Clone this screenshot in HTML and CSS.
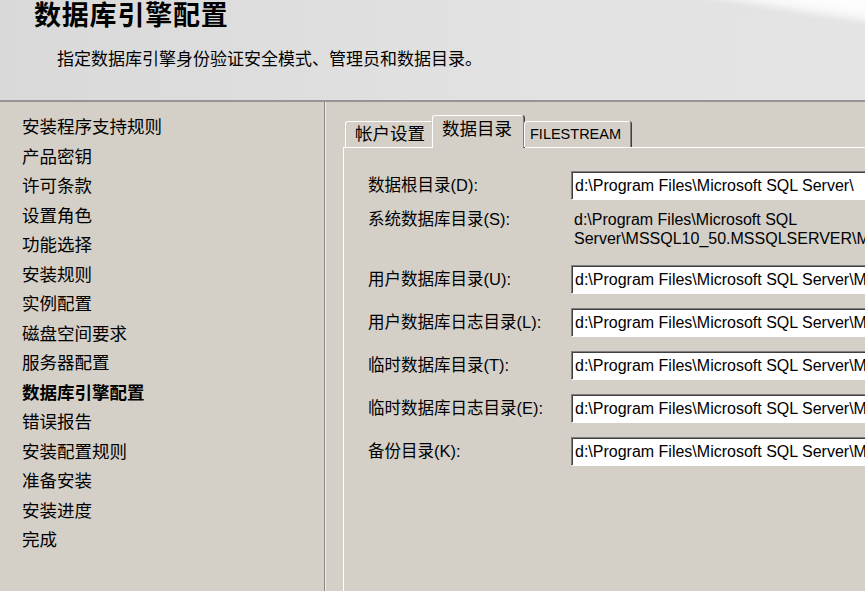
FILE: index.html
```html
<!DOCTYPE html>
<html lang="zh-CN">
<head>
    <meta charset="UTF-8">
    <title>数据库引擎配置</title>
    <link rel="stylesheet" href="styles.css">
</head>
<body>
    <div class="header">
        <div class="title">数据库引擎配置</div>
        <div class="subtitle">指定数据库引擎身份验证安全模式、管理员和数据目录。</div>
    </div>
    <div class="main">
        <div class="nav">
            <div>安装程序支持规则</div>
            <div>产品密钥</div>
            <div>许可条款</div>
            <div>设置角色</div>
            <div>功能选择</div>
            <div>安装规则</div>
            <div>实例配置</div>
            <div>磁盘空间要求</div>
            <div>服务器配置</div>
            <div class="current">数据库引擎配置</div>
            <div>错误报告</div>
            <div>安装配置规则</div>
            <div>准备安装</div>
            <div>安装进度</div>
            <div>完成</div>
        </div>
        <div class="content">
            <div class="tabs">
                <div class="tab">帐户设置</div>
                <div class="tab active">数据目录</div>
                <div class="tab latin">FILESTREAM</div>
            </div>
            <div class="panel">
                <div class="row">
                    <div class="label">数据根目录(D):</div>
                    <div class="field">d:\Program Files\Microsoft SQL Server\</div>
                </div>
                <div class="row sys">
                    <div class="label">系统数据库目录(S):</div>
                    <div class="value">d:\Program Files\Microsoft SQL<br>Server\MSSQL10_50.MSSQLSERVER\MSSQL\Data</div>
                </div>
                <div class="row">
                    <div class="label">用户数据库目录(U):</div>
                    <div class="field">d:\Program Files\Microsoft SQL Server\MSSQL10_50.MSSQLSERVER\MSSQL\Data</div>
                </div>
                <div class="row">
                    <div class="label">用户数据库日志目录(L):</div>
                    <div class="field">d:\Program Files\Microsoft SQL Server\MSSQL10_50.MSSQLSERVER\MSSQL\Data</div>
                </div>
                <div class="row">
                    <div class="label">临时数据库目录(T):</div>
                    <div class="field">d:\Program Files\Microsoft SQL Server\MSSQL10_50.MSSQLSERVER\MSSQL\Data</div>
                </div>
                <div class="row">
                    <div class="label">临时数据库日志目录(E):</div>
                    <div class="field">d:\Program Files\Microsoft SQL Server\MSSQL10_50.MSSQLSERVER\MSSQL\Data</div>
                </div>
                <div class="row">
                    <div class="label">备份目录(K):</div>
                    <div class="field">d:\Program Files\Microsoft SQL Server\MSSQL10_50.MSSQLSERVER\MSSQL\Backup</div>
                </div>
            </div>
        </div>
    </div>
</body>
</html>
```

FILE: styles.css
```css
html, body {
    margin: 0;
    padding: 0;
    width: 865px;
    height: 591px;
    overflow: hidden;
}
body {
    background: #d4d0c8;
    color: #000;
    font-family: "Liberation Sans", "Noto Sans CJK SC", sans-serif;
}
.header {
    position: relative;
    height: 100px;
    border-bottom: 2px solid #959595;
    background: linear-gradient(to right, #d9d9d9, #e2e2e2 60%, #e4e4e4);
    overflow: hidden;
}
.header::after {
    content: "";
    position: absolute;
    top: -30px;
    right: -60px;
    width: 260px;
    height: 40px;
    background: linear-gradient(to bottom, rgba(255,255,255,0.2), #fff 60%, rgba(255,255,255,0.6));
    transform: rotate(9deg);
    filter: blur(3px);
}
.title {
    padding: 0 0 0 34px;
    font-size: 27px;
    font-weight: bold;
    line-height: 32px;
    letter-spacing: 0.8px;
}
.subtitle {
    padding: 11px 0 0 57px;
    font-size: 17px;
    line-height: 34px;
}
.main {
    display: flex;
    height: 489px;
}
.nav {
    width: 325px;
    flex-shrink: 0;
    padding: 11px 0 0 22px;
    box-sizing: border-box;
    border-right: 1px solid #8a8784;
    box-shadow: 1px 0 0 #ecebe8;
    font-size: 17.5px;
    line-height: 29.5px;
    white-space: nowrap;
}
.nav .current {
    font-weight: bold;
}
.content {
    flex: 1;
    min-width: 0;
    padding: 11px 0 0 18px;
    display: flex;
    flex-direction: column;
}
.tabs {
    display: flex;
    align-items: flex-end;
    padding-left: 2px;
    height: 34px;
    position: relative;
    z-index: 1;
}
.tab {
    height: 25px;
    padding: 0 7px 0 9px;
    font-size: 17.5px;
    line-height: 24px;
    white-space: nowrap;
    border-top: 1px solid #fff;
    border-left: 1px solid #fff;
    border-right: 1px solid #808080;
    box-shadow: 1px 0 0 #404040;
    border-radius: 3px 3px 0 0;
    margin-right: 1px;
}
.tab.active {
    height: 32px;
    padding: 0 11px 0 9px;
    line-height: 26px;
    margin: 0 0 -1px -2px;
    background: #d4d0c8;
}
.tab.latin {
    font-size: 14.5px;
    padding: 0 9px 0 5px;
    line-height: 25px;
}
.panel {
    flex: 1;
    border-top: 1px solid #fff;
    border-left: 1px solid #fff;
    padding: 23px 0 0 24px;
    white-space: nowrap;
}
.row {
    display: flex;
    align-items: center;
    height: 29px;
    margin-bottom: 14px;
}
.row.sys {
    align-items: flex-start;
    height: 38px;
    margin: -4px 0 17px;
}
.label {
    width: 203px;
    flex-shrink: 0;
    font-size: 16.5px;
    line-height: 19px;
}
.field {
    width: 420px;
    flex-shrink: 0;
    height: 29px;
    box-sizing: border-box;
    background: #fff;
    border-top: 1px solid #808080;
    border-left: 1px solid #808080;
    border-bottom: 1px solid #fff;
    box-shadow: inset 1px 1px 0 #404040;
    padding: 0 0 0 3px;
    font-size: 16px;
    line-height: 27px;
    overflow: hidden;
}
.value {
    font-size: 16px;
    line-height: 19px;
    padding-left: 3px;
}
```
